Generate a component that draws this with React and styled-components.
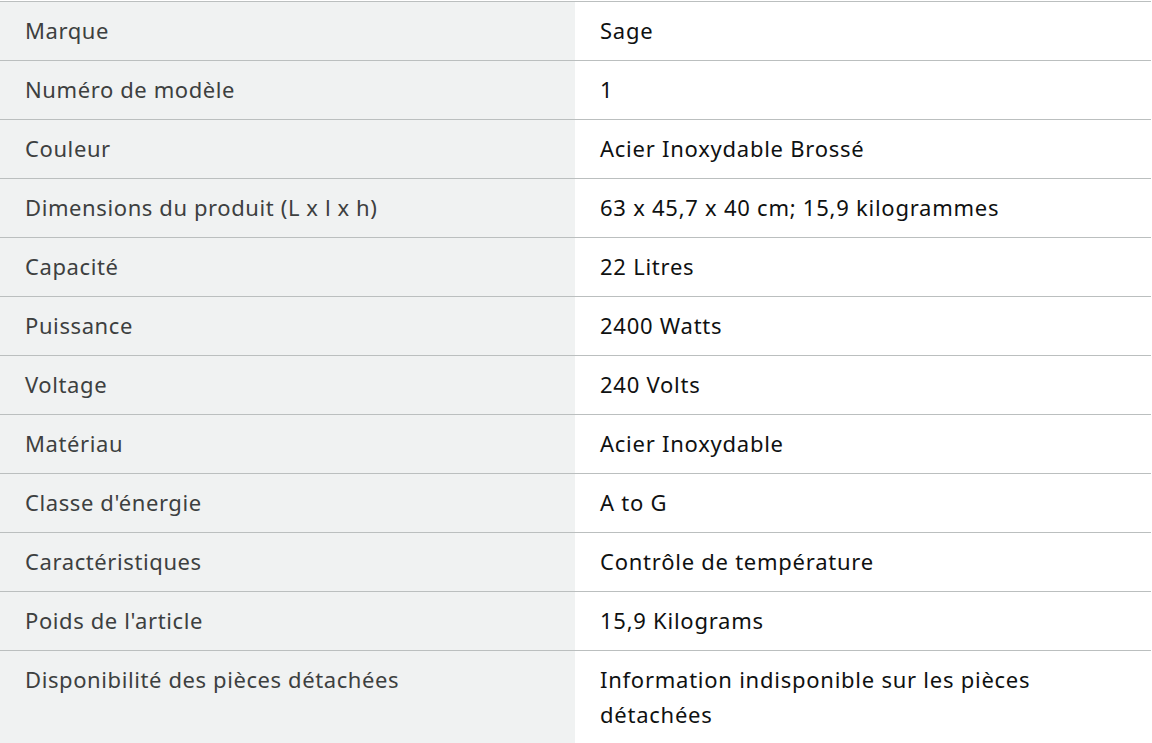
import React from "react";
import styled, { createGlobalStyle } from "styled-components";

const Global = createGlobalStyle`
  html, body {
    margin: 0;
    padding: 0;
    background: #fff;
  }
  body {
    font-family: "Noto Sans", "Open Sans", sans-serif;
  }
`;

const Wrap = styled.div`
  padding-top: 1px;
  width: 1151px;
`;

const Table = styled.table`
  width: 100%;
  border-collapse: collapse;
  border-top: 1px solid #bbbfbf;
  table-layout: fixed;
`;

const Row = styled.tr`
  border-bottom: 1px solid #bbbfbf;
`;

const Label = styled.th`
  width: 575px;
  box-sizing: border-box;
  background: #f0f2f2;
  color: #3d4040;
  font-weight: 400;
  text-align: left;
  vertical-align: top;
  font-size: 22px;
  letter-spacing: 0.6px;
  line-height: 35px;
  padding: 11px 25px 12px 25px;
`;

const Value = styled.td`
  color: #0f1111;
  font-size: 22px;
  letter-spacing: 0.75px;
  line-height: 35px;
  vertical-align: top;
  padding: 11px 110px 12px 25px;
`;

const specs = [
  ["Marque", "Sage"],
  ["Numéro de modèle", "1"],
  ["Couleur", "Acier Inoxydable Brossé"],
  ["Dimensions du produit (L x l x h)", "63 x 45,7 x 40 cm; 15,9 kilogrammes"],
  ["Capacité", "22 Litres"],
  ["Puissance", "2400 Watts"],
  ["Voltage", "240 Volts"],
  ["Matériau", "Acier Inoxydable"],
  ["Classe d'énergie", "A to G"],
  ["Caractéristiques", "Contrôle de température"],
  ["Poids de l'article", "15,9 Kilograms"],
  ["Disponibilité des pièces détachées", "Information indisponible sur les pièces détachées"],
];

export default function App() {
  return (
    <>
      <Global />
      <Wrap>
        <Table>
          <tbody>
            {specs.map(([k, v]) => (
              <Row key={k}>
                <Label>{k}</Label>
                <Value>{v}</Value>
              </Row>
            ))}
          </tbody>
        </Table>
      </Wrap>
    </>
  );
}
